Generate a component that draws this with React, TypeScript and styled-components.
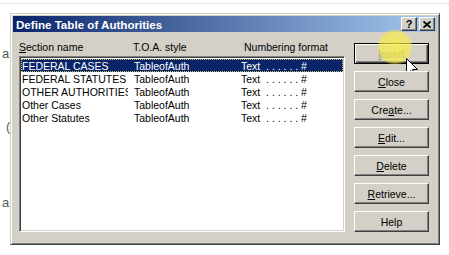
import React from 'react';
import styled, { createGlobalStyle } from 'styled-components';

const GlobalStyle = createGlobalStyle`
  html, body {
    margin: 0;
    padding: 0;
    background: #ffffff;
    font-family: "Liberation Sans", Arial, sans-serif;
  }
`;

const Page = styled.div`
  width: 449px;
  height: 255px;
  overflow: hidden;
  background: #fff;
  display: flex;
  flex-direction: column;
`;

const DocStrip = styled.div`
  height: 10px;
  border-top: 1px dotted #e2cdd6;
  margin-top: 3px;
  box-sizing: border-box;
`;

const Row = styled.div`
  display: flex;
  flex: 1;
`;

const Gutter = styled.div`
  width: 10px;
  display: flex;
  flex-direction: column;
  padding-top: 34px;
  box-sizing: border-box;
  color: #555;
  font-size: 13px;
  line-height: 13px;
`;

const GutterChar = styled.span<{ $gap: number; $x: number }>`
  display: block;
  margin-top: ${p => p.$gap}px;
  padding-left: ${p => p.$x}px;
`;

const Window = styled.div`
  width: 430px;
  height: 232px;
  box-sizing: border-box;
  background: #d4d0c8;
  border: 1px solid;
  border-color: #d4d0c8 #404040 #404040 #d4d0c8;
  box-shadow: inset 1px 1px #ffffff, inset -1px -1px #808080;
  padding: 2px;
  display: flex;
  flex-direction: column;
`;

const TitleBar = styled.div`
  height: 18px;
  background: linear-gradient(to right, #0a246a, #a6caf0);
  display: flex;
  align-items: center;
  padding: 0 2px 0 3px;
  gap: 2px;
`;

const TitleText = styled.div`
  flex: 1;
  color: #fff;
  font-weight: bold;
  font-size: 11.6px;
`;

const CaptionButton = styled.div`
  width: 16px;
  height: 14px;
  box-sizing: border-box;
  background: #d4d0c8;
  border: 1px solid;
  border-color: #ffffff #404040 #404040 #ffffff;
  box-shadow: inset -1px -1px #808080;
  display: flex;
  align-items: center;
  justify-content: center;
  font-weight: bold;
  font-size: 11px;
  color: #000;
`;

const Body = styled.div`
  flex: 1;
  display: flex;
  padding: 8px 5px 10px 6px;
  gap: 9px;
`;

const ListSide = styled.div`
  width: 326px;
  display: flex;
  flex-direction: column;
  gap: 2px;
`;

const Columns = styled.div`
  display: grid;
  grid-template-columns: 114px 111px 1fr;
  height: 14px;
  align-items: center;
  font-size: 10.5px;
  color: #000;
`;

const ListBox = styled.div`
  flex: 1;
  background: #fff;
  border: 1px solid;
  border-color: #808080 #ffffff #ffffff #808080;
  box-shadow: inset 1px 1px #404040, inset -1px -1px #d4d0c8;
  padding: 2px 1px 2px 1px;
`;

const ListRow = styled.div<{ $selected?: boolean }>`
  display: grid;
  grid-template-columns: 112px 107px 1fr;
  height: 13px;
  box-sizing: border-box;
  padding-left: 1px;
  align-items: center;
  font-size: 10.5px;
  white-space: pre;
  color: ${p => (p.$selected ? '#fff' : '#000')};
  background: ${p => (p.$selected ? '#0a246a' : 'transparent')};
  outline: ${p => (p.$selected ? '1px dotted #c8c060' : 'none')};
  outline-offset: -1px;
`;

const Cell = styled.span<{ $clip?: number }>`
  overflow: hidden;
  ${p => (p.$clip ? `max-width: ${p.$clip}px;` : '')}
`;

const Buttons = styled.div`
  width: 75px;
  display: flex;
  flex-direction: column;
  gap: 7px;
  padding-top: 3px;
`;

const Button = styled.div<{ $default?: boolean; $muted?: boolean }>`
  position: relative;
  height: 21px;
  box-sizing: border-box;
  background: #d4d0c8;
  border: 1px solid;
  border-color: ${p => (p.$default ? '#000' : '#ffffff #404040 #404040 #ffffff')};
  box-shadow: ${p =>
    p.$default
      ? 'inset 1px 1px #ffffff, inset -1px -1px #404040, inset -2px -2px #808080'
      : 'inset -1px -1px #808080'};
  display: flex;
  align-items: center;
  justify-content: center;
  font-size: 10.5px;
  color: ${p => (p.$muted ? '#8c8c6a' : '#000')};
`;

const Glow = styled.div`
  position: absolute;
  left: 22px;
  top: -15px;
  width: 36px;
  height: 36px;
  border-radius: 50%;
  background: radial-gradient(circle, rgba(250, 240, 60, 0.75) 0%, rgba(250, 240, 60, 0.6) 60%, rgba(250, 240, 60, 0) 72%);
  pointer-events: none;
`;

const Cursor = styled.svg`
  position: absolute;
  left: 51px;
  top: 14px;
`;

const U = styled.span`
  text-decoration: underline;
`;

const rows = [
  { name: 'FEDERAL CASES', selected: true },
  { name: 'FEDERAL STATUTES' },
  { name: 'OTHER AUTHORITIES' },
  { name: 'Other Cases' },
  { name: 'Other Statutes' },
];

const App: React.FC = () => {
  return (
    <Page>
      <GlobalStyle />
      <DocStrip />
      <Row>
        <Gutter>
          <GutterChar $gap={0} $x={2}>a</GutterChar>
          <GutterChar $gap={60} $x={6}>(</GutterChar>
          <GutterChar $gap={63} $x={2}>a</GutterChar>
        </Gutter>
        <Window>
          <TitleBar>
            <TitleText>Define Table of Authorities</TitleText>
            <CaptionButton>?</CaptionButton>
            <CaptionButton>
              <svg width="8" height="7" viewBox="0 0 8 7">
                <path d="M0.5 0.5 L7.5 6.5 M7.5 0.5 L0.5 6.5" stroke="#000" strokeWidth="1.8" />
              </svg>
            </CaptionButton>
          </TitleBar>
          <Body>
            <ListSide>
              <Columns>
                <span><U>S</U>ection name</span>
                <span>T.O.A. style</span>
                <span>Numbering format</span>
              </Columns>
              <ListBox>
                {rows.map(r => (
                  <ListRow key={r.name} $selected={r.selected}>
                    <Cell $clip={106}>{r.name}</Cell>
                    <Cell>TableofAuth</Cell>
                    <Cell>{'Text  . . . . . . #'}</Cell>
                  </ListRow>
                ))}
              </ListBox>
            </ListSide>
            <Buttons>
              <Button $default $muted>
                <span><U>I</U>nsert</span>
                <Glow />
                <Cursor width="13" height="21" viewBox="0 0 13 21">
                  <path
                    d="M0.5 0.5 L0.5 16.5 L4.5 12.5 L7.5 19.5 L9.5 18.5 L6.5 11.5 L11.5 11.5 Z"
                    fill="#fff"
                    stroke="#000"
                    strokeWidth="1"
                  />
                </Cursor>
              </Button>
              <Button><span><U>C</U>lose</span></Button>
              <Button><span>Cre<U>a</U>te...</span></Button>
              <Button><span><U>E</U>dit...</span></Button>
              <Button><span><U>D</U>elete</span></Button>
              <Button><span><U>R</U>etrieve...</span></Button>
              <Button><span>Help</span></Button>
            </Buttons>
          </Body>
        </Window>
      </Row>
    </Page>
  );
};

export default App;
